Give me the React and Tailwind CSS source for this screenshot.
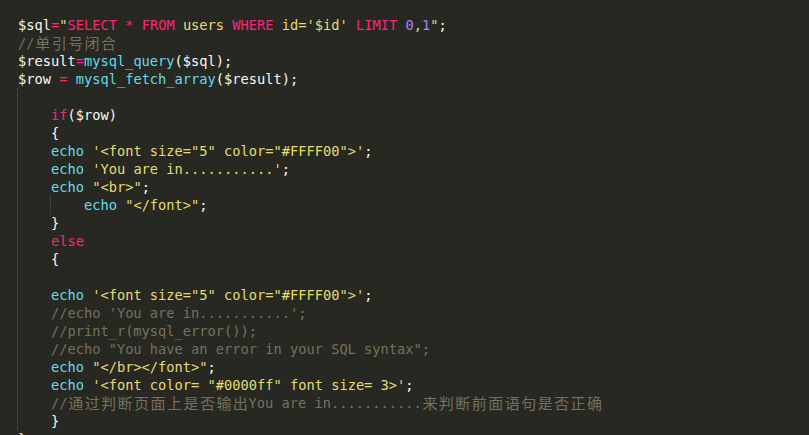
import React from "react";

// monokai palette
const tone = {
    w: "text-[#f8f8f2]",
    p: "text-[#f92672]",
    y: "text-[#e6db74]",
    c: "text-[#66d9ef]",
    n: "text-[#ae81ff]",
    g: "text-[#75715e]",
};

const cjk = /[\u4e00-\u9fff]/;

function Token({ text, color }) {
    // CJK glyphs take two monospace cells, like the editor grid
    const parts = text.split(/([\u4e00-\u9fff])/).filter(Boolean);
    return (
        <span className={tone[color]}>
            {parts.map((part, i) =>
                cjk.test(part) ? (
                    <span
                        key={i}
                        className="inline-block w-[16.48px] text-center align-top font-['Noto_Sans_CJK_SC',sans-serif] text-[15px]"
                    >
                        {part}
                    </span>
                ) : (
                    <span key={i}>{part}</span>
                )
            )}
        </span>
    );
}

const head = [
    [
        ["$sql", "w"], ["=", "p"], ["\"", "y"], ["SELECT", "p"], [" ", "y"], ["*", "p"], [" ", "y"],
        ["FROM", "p"], [" users ", "y"], ["WHERE", "p"], [" id='$id' ", "y"], ["LIMIT", "p"],
        [" ", "y"], ["0", "n"], [",", "y"], ["1", "n"], ["\"", "y"], [";", "w"],
    ],
    [["//单引号闭合", "g"]],
    [["$result", "w"], ["=", "p"], ["mysql_query", "c"], ["($sql);", "w"]],
    [["$row ", "w"], ["=", "p"], [" ", "w"], ["mysql_fetch_array", "c"], ["($result);", "w"]],
];

const body = [
    [],
    [["    ", "w"], ["if", "p"], ["($row)", "w"]],
    [["    {", "w"]],
    [["    ", "w"], ["echo", "c"], [" '<font size=\"5\" color=\"#FFFF00\">'", "y"], [";", "w"]],
    [["    ", "w"], ["echo", "c"], [" 'You are in...........'", "y"], [";", "w"]],
    [["    ", "w"], ["echo", "c"], [" \"<br>\"", "y"], [";", "w"]],
    "guide",
    [["    }", "w"]],
    [["    ", "w"], ["else", "p"]],
    [["    {", "w"]],
    [],
    [["    ", "w"], ["echo", "c"], [" '<font size=\"5\" color=\"#FFFF00\">'", "y"], [";", "w"]],
    [["    //echo 'You are in...........';", "g"]],
    [["    //print_r(mysql_error());", "g"]],
    [["    //echo \"You have an error in your SQL syntax\";", "g"]],
    [["    ", "w"], ["echo", "c"], [" \"</br></font>\"", "y"], [";", "w"]],
    [["    ", "w"], ["echo", "c"], [" '<font color= \"#0000ff\" font size= 3>'", "y"], [";", "w"]],
    [["    //通过判断页面上是否输出You are in...........来判断前面语句是否正确", "g"]],
    [["    }", "w"]],
];

function Line({ tokens }) {
    return (
        <div className="h-[18px] whitespace-pre">
            {tokens.map(([text, color], i) => (
                <Token key={i} text={text} color={color} />
            ))}
        </div>
    );
}

export default function App() {
    return (
        <div className="w-[809px] h-[435px] overflow-hidden bg-[#272822] pt-[16px] pl-[18px] font-['DejaVu_Sans_Mono',monospace] text-[13.7px] leading-[18px] text-[#f8f8f2]">
            {head.map((tokens, i) => (
                <Line key={i} tokens={tokens} />
            ))}
            <div className="-ml-px border-l border-dotted border-[#55564f]">
                {body.map((tokens, i) =>
                    tokens === "guide" ? (
                        <div key={i} className="h-[18px] whitespace-pre">
                            <span>    </span>
                            <span className="inline-block h-[18px] -ml-px border-l border-dotted border-[#55564f] align-top">
                                {"    "}
                            </span>
                            <Token text="echo" color="c" />
                            <Token text={' "</font>"'} color="y" />
                            <Token text=";" color="w" />
                        </div>
                    ) : (
                        <Line key={i} tokens={tokens} />
                    )
                )}
            </div>
            <Line tokens={[["}", "w"]]} />
        </div>
    );
}
